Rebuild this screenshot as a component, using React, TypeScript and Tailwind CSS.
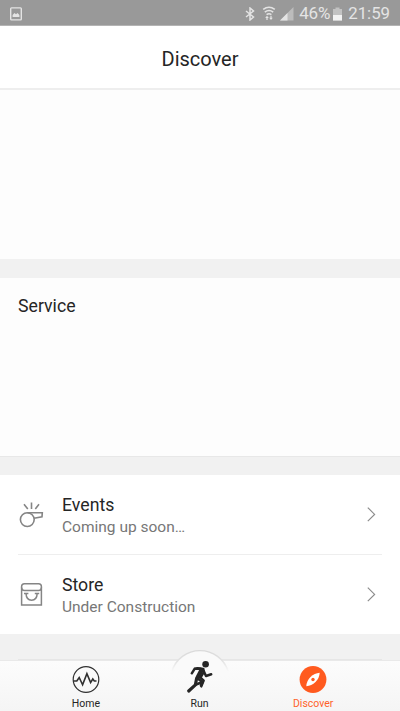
import React from "react";

interface RowProps {
    title: string
    subtitle: string
    icon: React.ReactNode
}

const WhistleIcon = () => (
    <svg width="27" height="27" viewBox="0 0 27 27" fill="none" stroke="#858585" strokeWidth="1.6">
        <circle cx="9.3" cy="18.6" r="6.9" />
        <path d="M9.3 11.7H24.3L24 15.8L16 17.2M6 3.3L9.8 8M13.5 1.5V8M21 3.3L17.3 8" />
    </svg>
)

const StoreIcon = () => (
    <svg width="27" height="27" viewBox="0 0 27 27" fill="none" stroke="#858585" strokeWidth="1.5">
        <path d="M3.6 5.5Q3.6 2.7 6.4 2.7H20.6Q23.4 2.7 23.4 5.5V24H3.6Z" />
        <path d="M3.6 6.5Q3.6 9.6 6.4 9.6H20.6Q23.4 9.6 23.4 6.5" />
        <path d="M6 12.4H10.4M16.8 12.4H21.2M8 12.4Q8.3 19.2 13.6 19.2T19.2 12.4" />
    </svg>
)

const Row: React.FunctionComponent<RowProps> = (props: RowProps) => {
    const { title, subtitle, icon } = props

    return (
        <div className="flex h-[79px] items-center pl-[18px] pr-[24px]">
            <div className="w-[44px]">{icon}</div>
            <div className="flex-1 pt-[3px]">
                <h6 className="text-[17.7px] leading-[22px] text-[#252525]">{title}</h6>
                <p className="text-[15.5px] leading-[23px] text-[#777777]">{subtitle}</p>
            </div>
            <svg width="9" height="15" viewBox="0 0 9 15" fill="none" stroke="#8c8c8c" strokeWidth="1.2">
                <path d="M.8 .6L7.6 7.4L.8 14.2" />
            </svg>
        </div>
    )
}

const StatusBar = () => (
    <div className="flex h-[26px] items-center justify-between border-b border-[#b4b4b4] bg-[#999999] px-[10px] pt-[2px] text-[#e4e4e4]">
        <svg width="12" height="14" viewBox="0 0 12 14">
            <rect x=".7" y=".9" width="10.6" height="12" rx=".8" fill="none" stroke="currentColor" strokeWidth="1.4" />
            <path d="M2.6 10V8L4.5 6L6 7.3L7.5 6L9.4 8V10Z" fill="currentColor" />
        </svg>
        <div className="flex items-center">
            {/* bluetooth */}
            <svg width="10" height="14" viewBox="0 0 10 14" fill="none" stroke="currentColor" strokeWidth="1.5">
                <path d="M1 4L8.5 10L5 13V1L8.5 4L1 10" />
            </svg>
            {/* wifi */}
            <svg width="14" height="15" viewBox="0 0 14 15" className="ml-[7px]" fill="none" stroke="currentColor" strokeWidth="1.6">
                <path d="M1.2 3.4Q7 -.8 12.8 3.4M2.8 6.1Q7 2.8 11.2 6.1M4.6 8.6Q7 6.8 9.4 8.6" />
                <path d="M3.2 12L5 9.8L6.8 12H5.6V14H4.4V12ZM7.2 11.8H8.4V9.8H9.6V11.8H10.8L9 14Z" fill="currentColor" stroke="none" />
            </svg>
            {/* signal */}
            <svg width="14" height="14" viewBox="0 0 14 14" className="ml-[4px]">
                <path d="M0 13.5L13.5 0V13.5Z" fill="#bcbcbc" />
                <path d="M0 13.5L7.5 6V13.5Z" fill="currentColor" />
            </svg>
            <span className="ml-[5px] w-[33px] text-[17px] leading-[25px] tracking-[-0.2px]">46%</span>
            <svg width="9" height="14" viewBox="0 0 9 14" className="ml-[1px] mr-[6px]">
                <path d="M0 2H2.5V.5H6.5V2H9V13.5H0Z" fill="#c2c2c2" />
                <path d="M0 8H9V13.5H0Z" fill="#f2f2f2" />
            </svg>
            <span className="text-[16.8px] leading-[25px]">21:59</span>
        </div>
    </div>
)

const TabBar = () => (
    <nav className="relative flex h-[51px] border-t border-[#e9e9e9] bg-linear-to-b from-[#fcfcfc] to-[#f5f5f5] pl-[29px] pr-[30px] text-[10.5px] leading-[14px] text-[#252525]">
        {/* raised edge behind the run button */}
        <svg width="64" height="36" viewBox="168 648 64 36" className="absolute left-[168px] -top-[13px]">
            <defs>
                <linearGradient id="edge" x1="0" y1="0" x2="0" y2="1">
                    <stop offset="0" stopColor="#dadada" />
                    <stop offset="0.5" stopColor="#e2e2e2" />
                    <stop offset="1" stopColor="#fafafa" />
                </linearGradient>
            </defs>
            <path d="M171.8 671.5A29.5 29.5 0 0 1 228.2 671.5V676H171.8Z" fill="#fafafa" />
            <path d="M171.8 671.5A29.5 29.5 0 0 1 228.2 671.5" fill="none" stroke="url(#edge)" strokeWidth="1.4" />
        </svg>
        <div className="relative flex flex-1 flex-col items-center pt-[5px]">
            <svg width="28" height="28" viewBox="0 0 28 28" fill="none" stroke="#303030">
                <circle cx="14" cy="13.5" r="12.8" strokeWidth="1.2" />
                <path d="M1.5 15H4.8L7.2 11.5L10.6 18.8L14.9 7.6L18.6 16.6L20.8 13L22.3 15H24.5" strokeWidth="1.6" />
            </svg>
            <span className="mt-[3px]">Home</span>
        </div>
        <div className="relative flex flex-1 flex-col items-center">
            <svg width="30" height="36" viewBox="185 661 30 36" className="overflow-visible" fill="none" stroke="#252525" strokeLinecap="round" strokeLinejoin="round">
                <circle cx="205.6" cy="664.3" r="3.3" fill="#252525" stroke="none" />
                <path d="M191.8 673.3L194.9 668.4L200.8 668.8L203.8 671.2L206 676L211.2 674.3" strokeWidth="2.5" />
                <path d="M197.2 668.2L203.4 668.8L204 672L200.6 677.6L203.8 680.6L201.3 686.5" strokeWidth="2.2" />
                <path d="M201.4 670.5L197.8 677.5" strokeWidth="4.6" />
                <path d="M196.6 678.5L195.4 684.8L188.7 691" strokeWidth="3.2" />
                <path d="M197.5 678.5L202.6 681.8L201 685.5M196 684.5L200 683" strokeWidth="2.6" />
            </svg>
            <span>Run</span>
        </div>
        <div className="relative flex flex-1 flex-col items-center pt-[5px] text-[#ff622b]">
            <svg width="28" height="28" viewBox="0 0 28 28">
                <circle cx="14" cy="13.5" r="13.4" fill="#ff5a1f" />
                <path d="M20.7 6.8Q20.5 12 16.5 16Q12.5 19.8 7.3 20.2Q7.5 15 11.5 11Q15.5 7.2 20.7 6.8Z" fill="#ffffff" />
                <circle cx="14" cy="13.5" r="1.7" fill="#ff5a1f" />
            </svg>
            <span className="mt-[3px]">Discover</span>
        </div>
    </nav>
)

export default function App() {
    return (
        <div className="flex h-[711px] w-[400px] flex-col overflow-hidden bg-[#f1f1f1] font-['Roboto',sans-serif]">
            <StatusBar />
            <header className="flex h-[64px] items-center justify-center border-b-2 border-[#eeeeee] bg-white pt-[3px]">
                <h1 className="text-[20px] leading-[24px] text-[#252525]">Discover</h1>
            </header>
            <section className="h-[169px] bg-[#fdfdfd]"></section>
            <section className="mt-[19px] h-[179px] border-b border-[#e8e8e8] bg-[#fdfdfd] px-[18px] pt-[16px]">
                <h2 className="text-[17.7px] leading-[24px] text-[#252525]">Service</h2>
            </section>
            <section className="mt-[18px] h-[159px] bg-white">
                <Row title="Events" subtitle="Coming up soon…" icon={<WhistleIcon />} />
                <div className="mx-[18px] h-px bg-[#eeeeee]"></div>
                <Row title="Store" subtitle="Under Construction" icon={<StoreIcon />} />
            </section>
            <div className="flex-1"></div>
            <div className="mx-[18px] h-px bg-[#e6e6e6]"></div>
            <TabBar />
        </div>
    )
}
